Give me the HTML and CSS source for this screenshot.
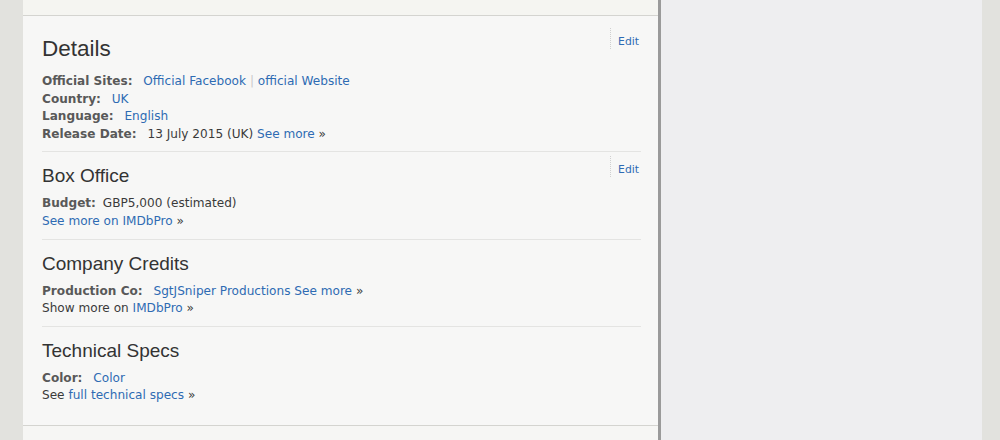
FILE: index.html
```html
<!DOCTYPE html>
<html lang="en">
<head>
  <meta charset="UTF-8" />
  <meta name="viewport" content="width=device-width, initial-scale=1.0"/>
  <title>Details</title>
  <link rel="stylesheet" href="styles.css">
</head>
<body>

  <div class="gutter"></div>

  <div class="main">
    <div class="top-block"></div>

    <div class="article">
      <div class="section first">
        <div class="section-head">
          <h2>Details</h2>
          <a class="edit" href="#">Edit</a>
        </div>
        <div class="row"><span class="label">Official Sites:</span> <a href="#">Official Facebook</a> <span class="pipe">|</span> <a href="#">official Website</a></div>
        <div class="row"><span class="label">Country:</span> <a href="#">UK</a></div>
        <div class="row"><span class="label">Language:</span> <a href="#">English</a></div>
        <div class="row"><span class="label">Release Date:</span> 13 July 2015 (UK) <a href="#">See more</a> &raquo;</div>
      </div>

      <div class="section">
        <div class="section-head">
          <h3>Box Office</h3>
          <a class="edit" href="#">Edit</a>
        </div>
        <div class="row"><span class="label tight">Budget:</span> GBP5,000 (estimated)</div>
        <div class="row"><a href="#">See more on IMDbPro</a> &raquo;</div>
      </div>

      <div class="section">
        <div class="section-head">
          <h3>Company Credits</h3>
        </div>
        <div class="row"><span class="label">Production Co:</span> <a href="#">SgtJSniper Productions</a> <a href="#">See more</a> &raquo;</div>
        <div class="row">Show more on <a href="#">IMDbPro</a> &raquo;</div>
      </div>

      <div class="section last">
        <div class="section-head">
          <h3>Technical Specs</h3>
        </div>
        <div class="row"><span class="label">Color:</span> <a href="#">Color</a></div>
        <div class="row">See <a href="#">full technical specs</a> &raquo;</div>
      </div>
    </div>
  </div>

  <div class="sidebar"></div>
  <div class="gutter right"></div>

</body>
</html>
```

FILE: styles.css
```css
* {
  box-sizing: border-box;
}

body {
  margin: 0;
  height: 100vh;
  overflow: hidden;
  display: flex;
  background: #eeeef0;
  font-family: "DejaVu Sans", Verdana, sans-serif;
  font-size: 12.1px;
  color: #3a3a3a;
}

a {
  color: #2e6bb3;
  text-decoration: none;
}

.gutter {
  width: 23px;
  flex-shrink: 0;
  background: #e2e2de;
}

.gutter.right {
  width: 18px;
}

.main {
  width: 638px;
  flex-shrink: 0;
  background: #f6f6f4;
  border-right: 3px solid #9a9a9a;
}

.top-block {
  height: 16px;
  background: #f5f5f1;
  border-bottom: 1px solid #d4d4d0;
}

.article {
  padding: 0 17px 0 19px;
  border-bottom: 1px solid #d4d4d0;
  background: #f7f7f6;
}

.sidebar {
  flex: 1;
  background: #eeeef0;
}

.section {
  padding: 4px 0 8px;
  border-bottom: 1px solid #e4e4e2;
}

.section.first {
  padding-top: 12px;
}

.section.last {
  border-bottom: none;
  padding-bottom: 20px;
}

.section-head {
  display: flex;
  justify-content: space-between;
  align-items: flex-start;
}

h2, h3 {
  font-family: "Liberation Sans", Arial, sans-serif;
  font-weight: normal;
  color: #333;
  margin: 8px 0 8px 0;
}

h2 {
  font-size: 22.5px;
  line-height: 26px;
  margin-bottom: 11px;
}

h3 {
  font-size: 19px;
  line-height: 22px;
  margin-top: 9px;
}

.edit {
  font-size: 10.8px;
  line-height: 12px;
  padding: 8px 0 1px 7px;
  margin-right: 2px;
  border-left: 1px dotted #d0d0d0;
}

.row {
  line-height: 17.6px;
  white-space: nowrap;
}

.label {
  font-weight: bold;
  color: #595959;
  margin-right: 7px;
}

.label.tight {
  margin-right: 3px;
}

.pipe {
  color: #ccc;
}
```
